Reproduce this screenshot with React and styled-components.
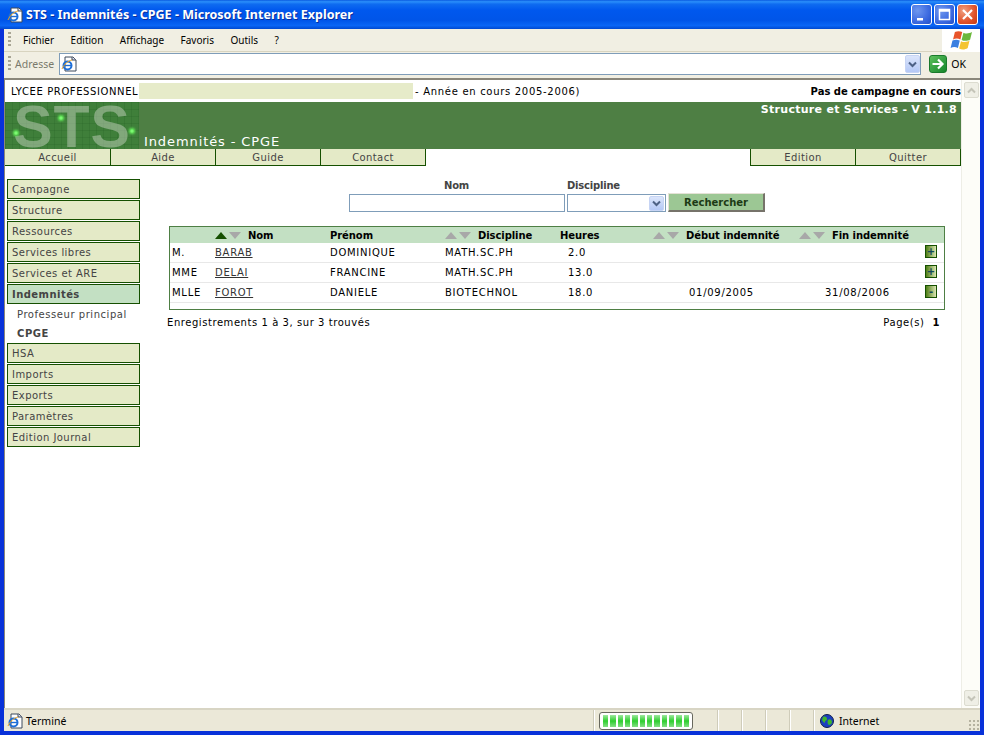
// Dependencies
// -----------------------------------------------
import React from 'react';
import styled, { createGlobalStyle, css } from 'styled-components';

// Data
// -----------------------------------------------
const menuItems = ['Fichier', 'Edition', 'Affichage', 'Favoris', 'Outils', '?'];
const leftTabs = ['Accueil', 'Aide', 'Guide', 'Contact'];
const rightTabs = ['Edition', 'Quitter'];
const topNav = ['Campagne', 'Structure', 'Ressources', 'Services libres', 'Services et ARE'];
const bottomNav = ['HSA', 'Imports', 'Exports', 'Paramètres', 'Edition Journal'];
const rows = [
  { civ: 'M.', nom: 'BARAB', prenom: 'DOMINIQUE', disc: 'MATH.SC.PH', heures: '2.0', debut: '', fin: '', sign: '+' },
  { civ: 'MME', nom: 'DELAI', prenom: 'FRANCINE', disc: 'MATH.SC.PH', heures: '13.0', debut: '', fin: '', sign: '+' },
  { civ: 'MLLE', nom: 'FOROT', prenom: 'DANIELE', disc: 'BIOTECHNOL', heures: '18.0', debut: '01/09/2005', fin: '31/08/2006', sign: '-' }
];
const SEGMENTS = Array.from({ length: 12 }, (_, i) => i);
const STATUS_CELLS = [24, 24, 24, 24];

// Styles
// -----------------------------------------------
const GlobalStyle = createGlobalStyle`
  html, body { margin: 0; padding: 0; background: #fff; }
  * { box-sizing: border-box; }
`;

const WINDOW_FONT = `"Noto Sans", "Liberation Sans", sans-serif`;
const PAGE_FONT = `"DejaVu Sans", Verdana, sans-serif`;

const Frame = styled.div`
  width: 984px;
  height: 735px;
  overflow: hidden;
  display: flex;
  flex-direction: column;
  background: #0831d9;
  font-family: ${WINDOW_FONT};
`;

const TitleBar = styled.div`
  height: 29px;
  flex: none;
  display: flex;
  align-items: center;
  padding: 0 6px 0 7px;
  background: linear-gradient(180deg, #0a5be0 0%, #2a8ffb 6%, #0f6cf0 14%, #0058ee 35%, #0055e8 70%, #0a66f5 88%, #0049d0 100%);
`;

const TitleText = styled.span`
  flex: 1;
  margin-left: 3px;
  color: #fff;
  font-size: 12.5px;
  font-weight: 700;
  letter-spacing: 0.01px;
  white-space: nowrap;
  text-shadow: 1px 1px 0 #0a2f9c;
`;

const WinButtons = styled.div`
  display: flex;
  gap: 2px;
`;

const WinButton = styled.div`
  width: 21px;
  height: 21px;
  border: 1px solid #fff;
  border-radius: 3px;
  display: flex;
  align-items: center;
  justify-content: center;
  background: ${p => p.$close
    ? 'radial-gradient(circle at 30% 30%, #f0a080, #e0522a 60%, #c13a14)'
    : 'radial-gradient(circle at 30% 30%, #6f97ee, #3c6ae0 60%, #2350c8)'};
`;

const Body = styled.div`
  flex: 1;
  min-height: 0;
  margin: 0 4px 4px;
  display: flex;
  flex-direction: column;
  background: #ece9d8;
`;

const MenuBar = styled.div`
  height: 23px;
  flex: none;
  display: flex;
  align-items: center;
  background: #f1efe3;
  border-bottom: 1px solid #d8d4c0;
`;

const Grip = styled.div`
  width: 3px;
  height: 16px;
  margin-left: 4px;
  flex: none;
  background: repeating-linear-gradient(180deg, #a8a594 0 2px, transparent 2px 4px);
`;

const MenuList = styled.div`
  flex: 1;
  display: flex;
  gap: 16.5px;
  margin-left: 12px;
  padding-bottom: 1px;
  font-size: 10px;
  color: #000;
`;

const LogoBox = styled.div`
  width: 38px;
  height: 23px;
  flex: none;
  display: flex;
  align-items: center;
  justify-content: center;
  background: #fff;
`;

const AddressBar = styled.div`
  height: 26px;
  flex: none;
  display: flex;
  align-items: center;
  padding: 0 14px 2px 0;
  background: #f1efe3;
`;

const AddressLabel = styled.span`
  margin-left: 4px;
  width: 44px;
  flex: none;
  font-size: 10.5px;
  color: #7a7a6c;
`;

const AddressInput = styled.div`
  flex: 1;
  height: 22px;
  display: flex;
  align-items: center;
  justify-content: space-between;
  padding: 1px 0 1px 1px;
  background: #fff;
  border: 1px solid #7f9db9;
`;

const ComboArrow = styled.div`
  width: ${p => p.$w || 15}px;
  height: ${p => p.$h || 18}px;
  flex: none;
  display: flex;
  align-items: center;
  justify-content: center;
  background: linear-gradient(180deg, #dbe5fb, #b4c8f6);
  border: 1px solid #c6d4f4;
  border-radius: 2px;
`;

const GoGroup = styled.div`
  display: flex;
  align-items: center;
  gap: 4px;
  margin-left: 8px;
  font-size: 10.5px;
  color: #000;
`;

const GoButton = styled.div`
  width: 18px;
  height: 18px;
  display: flex;
  align-items: center;
  justify-content: center;
  border-radius: 3px;
  background: linear-gradient(135deg, #5dc15d, #14862a);
  border: 1px solid #1a7a2c;
`;

const Viewport = styled.div`
  flex: 1;
  min-height: 0;
  display: flex;
  background: #fff;
  border-top: 2px solid #8a877b;
  border-left: 1px solid #8a877b;
`;

const Page = styled.div`
  flex: 1;
  min-width: 0;
  font-family: ${PAGE_FONT};
  font-size: 10px;
  color: #000;
`;

const InfoRow = styled.div`
  height: 22px;
  display: flex;
  align-items: center;
  padding: 0 0 0 6px;
`;

const InfoLabel = styled.span`
  width: 128px;
  flex: none;
  white-space: nowrap;
  letter-spacing: 0.6px;
`;

const InfoFill = styled.span`
  width: 274px;
  height: 16px;
  flex: none;
  background: #e6ebc9;
`;

const InfoYear = styled.span`
  flex: 1;
  margin-left: 2px;
  letter-spacing: 0.7px;
`;

const InfoStatus = styled.span`
  font-weight: 700;
  white-space: nowrap;
`;

const Banner = styled.div`
  height: 47px;
  display: flex;
  background: #4e7f44;
  color: #fff;
`;

const BannerLogo = styled.svg`
  width: 134px;
  height: 47px;
  flex: none;
  display: block;
`;

const BannerTitle = styled.div`
  flex: 1;
  display: flex;
  align-items: flex-end;
  padding: 0 0 0 5px;
  font-size: 13px;
  letter-spacing: 0.9px;
`;

const BannerVersion = styled.div`
  padding: 1px 4px 0 0;
  font-size: 11px;
  font-weight: 700;
  letter-spacing: 0.28px;
`;

const TabRow = styled.div`
  display: flex;
  justify-content: space-between;
`;

const TabGroup = styled.div`
  display: flex;
`;

const Tab = styled.div`
  width: ${p => (p.$wide ? 106 : 105)}px;
  height: 17px;
  display: flex;
  align-items: center;
  justify-content: center;
  background: #e4eac7;
  color: #444;
  letter-spacing: 0.4px;
  border-right: 1px solid #155000;
  border-bottom: 1px solid #155000;
  ${p => p.$edge && css`border-left: 1px solid #155000;`}
`;

const Content = styled.div`
  display: flex;
  padding: 13px 0 0 2px;
`;

const Sidebar = styled.nav`
  width: 133px;
  flex: none;
  display: flex;
  flex-direction: column;
  gap: 1px;
`;

const NavItem = styled.div`
  height: 20px;
  display: flex;
  align-items: center;
  padding-left: 4px;
  border: 1px solid #155000;
  color: #444;
  letter-spacing: 0.45px;
  background: ${p => (p.$active ? '#c3e0c3' : '#e4eac7')};
  font-weight: ${p => (p.$active ? 700 : 400)};
`;

const SubNav = styled.div`
  display: flex;
  flex-direction: column;
  height: 37px;
  padding-left: 10px;
  color: #444;
  letter-spacing: 0.55px;
`;

const SubItem = styled.div`
  height: 19px;
  flex: none;
  display: flex;
  align-items: center;
  font-weight: ${p => (p.$active ? 700 : 400)};
`;

const Main = styled.main`
  flex: 1;
  min-width: 0;
`;

const SearchForm = styled.div`
  display: grid;
  grid-template-columns: 216px 99px 97px;
  column-gap: 2px;
  width: 416px;
  margin-left: 209px;
  margin-top: 1px;
`;

const SearchLabel = styled.label`
  height: 13px;
  font-weight: 700;
  color: #444;
  line-height: 12px;
  letter-spacing: -0.2px;
  padding-left: ${p => p.$pad || 0}px;
`;

const SearchInput = styled.div`
  height: 18px;
  margin-top: 1px;
  border: 1px solid #7f9db9;
  background: #fff;
  display: flex;
  justify-content: flex-end;
  align-items: center;
  padding-right: 1px;
`;

const SearchButton = styled.div`
  height: 19px;
  display: flex;
  align-items: center;
  justify-content: center;
  font-weight: 700;
  color: #1c3a14;
  background: #9cc794;
  border-top: 1px solid #e4e2d6;
  border-left: 1px solid #e4e2d6;
  border-right: 2px solid #76736a;
  border-bottom: 2px solid #76736a;
`;

const TableBox = styled.div`
  width: 776px;
  height: 84px;
  margin: 14px 0 0 29px;
  border: 1px solid #4e7f44;
`;

const gridCols = '45px 115px 115px 115px 93px 146px 126px 20px';

const HeadRow = styled.div`
  display: grid;
  grid-template-columns: ${gridCols};
  height: 16px;
  align-items: center;
  background: #c3e0c3;
  font-weight: 700;
  letter-spacing: -0.08px;
`;

const HeadCell = styled.div`
  display: flex;
  align-items: center;
  white-space: nowrap;
`;

const SortIcons = styled.span`
  display: flex;
  gap: 2px;
  width: 33px;
  flex: none;
`;

const SortArrow = styled.i`
  width: 0;
  height: 0;
  border-left: 6.5px solid transparent;
  border-right: 6.5px solid transparent;
  ${p => (p.$up
    ? css`border-bottom: 7px solid ${p.$active ? '#155000' : '#a8a8a8'};`
    : css`border-top: 7px solid #a8a8a8;`)}
`;

const DataRow = styled.div`
  display: grid;
  grid-template-columns: ${gridCols};
  height: 20px;
  align-items: center;
  border-bottom: 1px solid #e8e8e8;
  &:first-of-type { height: 19px; }
`;

const Cell = styled.div`
  padding-left: ${p => p.$pad || 0}px;
  white-space: nowrap;
  letter-spacing: 0.72px;
`;

const NameLink = styled.a`
  color: #333;
  text-decoration: underline;
`;

const ExpandButton = styled.div`
  width: 12px;
  height: 13px;
  margin-bottom: 2px;
  display: flex;
  align-items: center;
  justify-content: center;
  border: 1px solid #155000;
  background: linear-gradient(90deg, #4d7d14, #dce6b4);
  color: #14485a;
  font-size: 10px;
  font-weight: 700;
  line-height: 1;
`;

const Pager = styled.div`
  width: 776px;
  display: flex;
  justify-content: space-between;
  margin: 7px 0 0 27px;
  padding-right: 3px;
  letter-spacing: 0.56px;
`;

const PagerCount = styled.b`
  margin-left: 8px;
`;

const ScrollBar = styled.div`
  width: 19px;
  flex: none;
  display: flex;
  flex-direction: column;
  justify-content: space-between;
  padding: 2px 1px 2px 2px;
  background: #fdfdf8;
  border-left: 1px solid #eeeee6;
`;

const ScrollButton = styled.div`
  height: 16px;
  display: flex;
  align-items: center;
  justify-content: center;
  background: #efefe6;
  border: 1px solid #dcdcd0;
  border-radius: 2px;
`;

const StatusBar = styled.div`
  height: 23px;
  flex: none;
  display: flex;
  align-items: center;
  font-size: 10.5px;
  color: #000;
  background: #ebe8d8;
  border-top: 2px solid #d8d5c4;
`;

const StatusText = styled.div`
  flex: 1;
  display: flex;
  align-items: center;
  gap: 3px;
  padding-left: 3px;
`;

const StatusCell = styled.div`
  width: ${p => p.$w}px;
  height: 100%;
  flex: none;
  display: flex;
  align-items: center;
  gap: 5px;
  padding-left: ${p => p.$pad || 0}px;
  border-left: 1px solid #fff;
  box-shadow: -1px 0 0 #cfccba;
`;

const Progress = styled.div`
  width: 94px;
  height: 18px;
  display: flex;
  gap: 2px;
  padding: 2px 3px;
  margin-left: 4px;
  background: #fff;
  border: 1px solid #68685e;
  border-radius: 3px;
`;

const ProgressSeg = styled.i`
  width: 6px;
  background: linear-gradient(180deg, #9ee89e, #2ece2e 50%, #84e084);
`;

const ResizeGrip = styled.div`
  width: 12px;
  height: 12px;
  flex: none;
  align-self: flex-end;
  background-image: radial-gradient(#b5b2a0 1px, transparent 1.3px);
  background-size: 4px 4px;
`;

// Icons
// -----------------------------------------------
const IeIcon = ({ size = 16 }) => (
  <svg width={size} height={size} viewBox="0 0 16 16">
    <path d="M4 1h8l3 3v11H4z" fill="#fff" stroke="#3c4a5c" />
    <path d="M11 1v3h4" fill="#dde" stroke="#3c4a5c" />
    <circle cx="6.5" cy="9.5" r="4" fill="none" stroke="#1e6fd8" strokeWidth="2" />
    <path d="M2.5 9.5h8" stroke="#1e6fd8" strokeWidth="1.4" />
    <path d="M1 13c2-5 6-8 10-9" fill="none" stroke="#e8a020" strokeWidth="1" />
  </svg>
);

const XpLogo = () => (
  <svg width="22" height="20" viewBox="0 2 18 15">
    <path d="M4 3c2-1 4-1 6 0l-1.500 6c-2-1-4-1-6 0z" fill="#e8542a" />
    <path d="M11 3.500c2 1 4 1 7-.5l-1.500 6c-2 1.500-5 1.500-7 .5z" fill="#6cb83c" />
    <path d="M2 10c2-1 4-1 6 0l-1.500 6c-2-1-4-1-6 0z" fill="#3a7fe0" />
    <path d="M9 10.500c2 1 5 1 7-.5l-1.500 6c-2 1.500-5 1.500-7 .5z" fill="#f4c430" />
  </svg>
);

const Chevron = ({ up, color = '#4d6185' }) => (
  <svg width="9" height="7" viewBox="0 0 9 7">
    <path d={up ? 'M1 5.500l3.500-3.500 3.500 3.500' : 'M1 1.500l3.500 3.500 3.500-3.500'} fill="none" stroke={color} strokeWidth="2" />
  </svg>
);

const Globe = () => (
  <svg width="14" height="14" viewBox="0 0 14 14">
    <circle cx="7" cy="7" r="6.500" fill="#1c3fc0" stroke="#10204a" />
    <path d="M3 3c2-1 4 0 4 2s-2 1-2 3-2 0-3-2zM8 6c2-2 4 0 4 2s-2 3-3 3-2-3-1-5z" fill="#3fb52e" />
  </svg>
);

const StsLogo = () => (
  <BannerLogo viewBox="0 0 134 47">
    <defs>
      <pattern id="logo-grid" width="7" height="7" patternUnits="userSpaceOnUse">
        <path d="M7 0H0V7" fill="none" stroke="#145014" strokeOpacity="0.28" />
      </pattern>
      <filter id="logo-glow" x="-100%" y="-100%" width="300%" height="300%">
        <feGaussianBlur stdDeviation="1" />
      </filter>
    </defs>
    <rect width="134" height="47" fill="#3f7f3a" />
    <rect width="134" height="47" fill="url(#logo-grid)" />
    <text
      x="67"
      y="45"
      textAnchor="middle"
      fontFamily="'Liberation Sans', Arial, sans-serif"
      fontSize="59"
      fontWeight="700"
      letterSpacing="1"
      fill="#becdb9"
      fillOpacity="0.52"
    >
      STS
    </text>
    {[[56, 16], [11, 31], [127, 29]].map(([x, y]) => (
      <g key={x}>
        <circle cx={x} cy={y} r="3" fill="#63f05a" filter="url(#logo-glow)" />
        <circle cx={x} cy={y} r="1.500" fill="#7cf872" />
      </g>
    ))}
  </BannerLogo>
);

// Components
// -----------------------------------------------
const HeadLabel = ({ sort, active, children }) => (
  <HeadCell>
    {sort ? (
      <SortIcons>
        <SortArrow $up $active={active} />
        <SortArrow />
      </SortIcons>
    ) : null}
    {children}
  </HeadCell>
);

// -----------------------------------------------
// COMPONENT->APP --------------------------------
// -----------------------------------------------
export default function App() {
  return (
    <Frame>
      <GlobalStyle />
      <TitleBar>
        <IeIcon />
        <TitleText>STS - Indemnités - CPGE - Microsoft Internet Explorer</TitleText>
        <WinButtons>
          <WinButton>
            <svg width="13" height="13" viewBox="0 0 13 13"><path d="M2 10h6v2.500H2z" fill="#fff" /></svg>
          </WinButton>
          <WinButton>
            <svg width="13" height="13" viewBox="0 0 13 13"><path d="M1.500 1.500h10v10h-10z M1.500 3h10" fill="none" stroke="#fff" strokeWidth="1.500" /></svg>
          </WinButton>
          <WinButton $close>
            <svg width="13" height="13" viewBox="0 0 13 13"><path d="M2 2l9 9M11 2l-9 9" stroke="#fff" strokeWidth="2.200" /></svg>
          </WinButton>
        </WinButtons>
      </TitleBar>

      <Body>
        <MenuBar>
          <Grip />
          <MenuList>
            {menuItems.map(item => <span key={item}>{item}</span>)}
          </MenuList>
          <LogoBox><XpLogo /></LogoBox>
        </MenuBar>

        <AddressBar>
          <Grip />
          <AddressLabel>Adresse</AddressLabel>
          <AddressInput>
            <IeIcon />
            <ComboArrow><Chevron /></ComboArrow>
          </AddressInput>
          <GoGroup>
            <GoButton>
              <svg width="14" height="14" viewBox="0 0 14 14"><path d="M1.500 7h10M7 2.500L11.500 7 7 11.500" fill="none" stroke="#fff" strokeWidth="2.200" /></svg>
            </GoButton>
            OK
          </GoGroup>
        </AddressBar>

        <Viewport>
          <Page>
            <InfoRow>
              <InfoLabel>LYCEE PROFESSIONNEL</InfoLabel>
              <InfoFill />
              <InfoYear>- Année en cours 2005-2006)</InfoYear>
              <InfoStatus>Pas de campagne en cours</InfoStatus>
            </InfoRow>

            <Banner>
              <StsLogo />
              <BannerTitle>Indemnités - CPGE</BannerTitle>
              <BannerVersion>Structure et Services - V 1.1.8</BannerVersion>
            </Banner>

            <TabRow>
              <TabGroup>
                {leftTabs.map((tab, i) => <Tab key={tab} $wide={i === 0}>{tab}</Tab>)}
              </TabGroup>
              <TabGroup>
                {rightTabs.map((tab, i) => <Tab key={tab} $edge={i === 0} $wide={i === 0}>{tab}</Tab>)}
              </TabGroup>
            </TabRow>

            <Content>
              <Sidebar>
                {topNav.map(item => <NavItem key={item}>{item}</NavItem>)}
                <NavItem $active>Indemnités</NavItem>
                <SubNav>
                  <SubItem>Professeur principal</SubItem>
                  <SubItem $active>CPGE</SubItem>
                </SubNav>
                {bottomNav.map(item => <NavItem key={item}>{item}</NavItem>)}
              </Sidebar>

              <Main>
                <SearchForm>
                  <SearchLabel $pad={95}>Nom</SearchLabel>
                  <SearchLabel>Discipline</SearchLabel>
                  <span />
                  <SearchInput />
                  <SearchInput><ComboArrow $w={15} $h={15}><Chevron /></ComboArrow></SearchInput>
                  <SearchButton>Rechercher</SearchButton>
                </SearchForm>

                <TableBox>
                  <HeadRow>
                    <span />
                    <HeadLabel sort active>Nom</HeadLabel>
                    <HeadLabel>Prénom</HeadLabel>
                    <HeadLabel sort>Discipline</HeadLabel>
                    <HeadLabel>Heures</HeadLabel>
                    <HeadLabel sort>Début indemnité</HeadLabel>
                    <HeadLabel sort>Fin indemnité</HeadLabel>
                    <span />
                  </HeadRow>
                  {rows.map(row => (
                    <DataRow key={row.nom}>
                      <Cell $pad={2}>{row.civ}</Cell>
                      <Cell><NameLink>{row.nom}</NameLink></Cell>
                      <Cell>{row.prenom}</Cell>
                      <Cell>{row.disc}</Cell>
                      <Cell $pad={8}>{row.heures}</Cell>
                      <Cell $pad={36}>{row.debut}</Cell>
                      <Cell $pad={26}>{row.fin}</Cell>
                      <ExpandButton>{row.sign}</ExpandButton>
                    </DataRow>
                  ))}
                </TableBox>

                <Pager>
                  <span>Enregistrements 1 à 3, sur 3 trouvés</span>
                  <span>Page(s)<PagerCount>1</PagerCount></span>
                </Pager>
              </Main>
            </Content>
          </Page>

          <ScrollBar>
            <ScrollButton><Chevron up color="#c4c4b8" /></ScrollButton>
            <ScrollButton><Chevron color="#c4c4b8" /></ScrollButton>
          </ScrollBar>
        </Viewport>

        <StatusBar>
          <StatusText><IeIcon />Terminé</StatusText>
          <StatusCell $w={124}>
            <Progress>
              {SEGMENTS.map(i => <ProgressSeg key={i} />)}
            </Progress>
          </StatusCell>
          {STATUS_CELLS.map((w, i) => <StatusCell key={i} $w={w} />)}
          <StatusCell $w={154} $pad={5}><Globe />Internet</StatusCell>
          <ResizeGrip />
        </StatusBar>
      </Body>
    </Frame>
  );
}
